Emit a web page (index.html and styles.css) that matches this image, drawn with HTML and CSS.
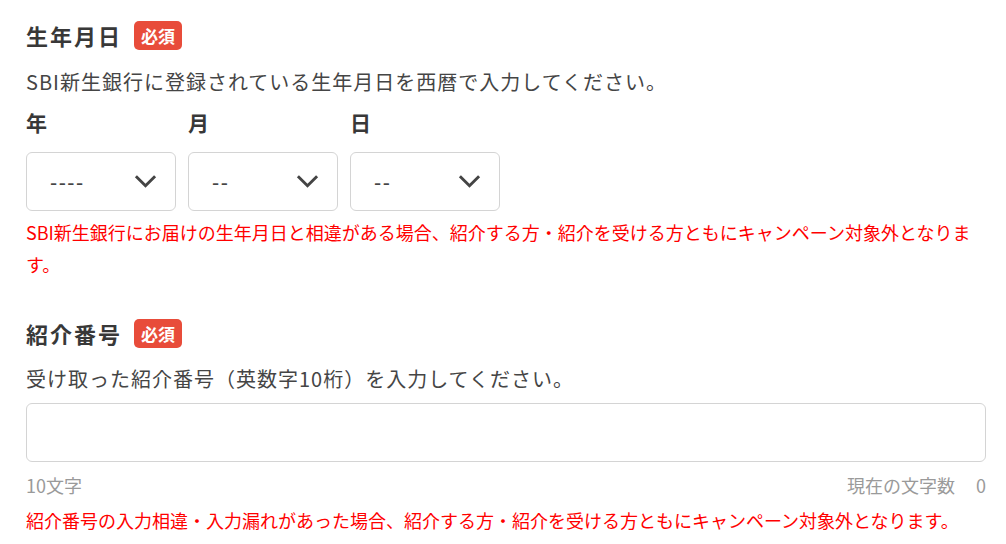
FILE: index.html
```html
<!DOCTYPE html>
<html lang="ja">
<head>
<meta charset="utf-8">
<title>紹介キャンペーン申込</title>
<link rel="stylesheet" href="styles.css">
</head>
<body>
<main class="form">
  <section class="field">
    <div class="field-head">
      <h2 class="field-title">生年月日</h2>
      <span class="badge">必須</span>
    </div>
    <p class="field-desc">SBI新生銀行に登録されている生年月日を西暦で入力してください。</p>
    <div class="date-row">
      <div class="date-col">
        <label class="date-label" for="birth-year">年</label>
        <div class="select-wrap">
          <select class="select" id="birth-year"><option>----</option></select>
          <svg class="chevron" viewBox="0 0 24 14" aria-hidden="true"><path d="M2 2 L12 12 L22 2"/></svg>
        </div>
      </div>
      <div class="date-col">
        <label class="date-label" for="birth-month">月</label>
        <div class="select-wrap">
          <select class="select" id="birth-month"><option>--</option></select>
          <svg class="chevron" viewBox="0 0 24 14" aria-hidden="true"><path d="M2 2 L12 12 L22 2"/></svg>
        </div>
      </div>
      <div class="date-col">
        <label class="date-label" for="birth-day">日</label>
        <div class="select-wrap">
          <select class="select" id="birth-day"><option>--</option></select>
          <svg class="chevron" viewBox="0 0 24 14" aria-hidden="true"><path d="M2 2 L12 12 L22 2"/></svg>
        </div>
      </div>
    </div>
    <p class="field-note">SBI新生銀行にお届けの生年月日と相違がある場合、紹介する方・紹介を受ける方ともにキャンペーン対象外となります。</p>
  </section>

  <section class="field field-next">
    <div class="field-head">
      <h2 class="field-title">紹介番号</h2>
      <span class="badge">必須</span>
    </div>
    <p class="field-desc">受け取った紹介番号（英数字10桁）を入力してください。</p>
    <textarea class="text-input" rows="1" aria-label="紹介番号"></textarea>
    <div class="counter">
      <span>10文字</span>
      <span>現在の文字数<span class="counter-num">0</span></span>
    </div>
    <p class="field-note">紹介番号の入力相違・入力漏れがあった場合、紹介する方・紹介を受ける方ともにキャンペーン対象外となります。</p>
  </section>
</main>
</body>
</html>
```

FILE: styles.css
```css
html, body {
  margin: 0;
  background: #fff;
}

body {
  padding: 20px 20px 0 26px;
  font-family: "Noto Sans CJK JP", "Noto Sans", sans-serif;
  color: #454545;
}

.form {
  display: flex;
  flex-direction: column;
}

.field {
  display: flex;
  flex-direction: column;
}

.field-next {
  margin-top: 38px;
}

.field-head {
  display: flex;
  align-items: center;
  gap: 12px;
  height: 30px;
}

.field-title {
  margin: 0;
  font-size: 22px;
  line-height: 30px;
  font-weight: 700;
  color: #383838;
  letter-spacing: 2px;
}

.badge {
  display: inline-flex;
  align-items: center;
  justify-content: center;
  width: 48px;
  height: 29px;
  border-radius: 5px;
  background: #e84c3a;
  color: #fff;
  font-size: 17px;
  font-weight: 700;
}

.field-desc {
  margin: 16px 0 0;
  font-size: 20px;
  line-height: 32px;
  letter-spacing: 1px;
}

.field-next .field-desc {
  margin-top: 15px;
}

.date-row {
  display: grid;
  grid-template-columns: repeat(3, 150px);
  column-gap: 12px;
  margin-top: 8px;
}

.date-col {
  display: flex;
  flex-direction: column;
}

.date-label {
  font-size: 21px;
  line-height: 32px;
  font-weight: 700;
  color: #383838;
}

.select-wrap {
  position: relative;
  margin-top: 14px;
}

.select {
  appearance: none;
  -webkit-appearance: none;
  display: block;
  width: 100%;
  height: 59px;
  margin: 0;
  padding: 0 0 0 23px;
  border: 1px solid #d4d4d4;
  border-radius: 6px;
  background: #fff;
  font-family: inherit;
  font-size: 20px;
  font-weight: 500;
  color: #454545;
  letter-spacing: 1.5px;
}

.chevron {
  position: absolute;
  right: 19px;
  top: 22px;
  width: 23px;
  height: 14px;
  fill: none;
  stroke: #444;
  stroke-width: 3;
  pointer-events: none;
}

.field-note {
  margin: 5px 0 0;
  font-size: 18px;
  line-height: 32px;
  color: #ff0000;
}

.text-input {
  display: block;
  box-sizing: border-box;
  width: 100%;
  height: 59px;
  margin: 8px 0 0;
  padding: 12px 16px;
  border: 1px solid #d4d4d4;
  border-radius: 6px;
  font-family: inherit;
  font-size: 20px;
  resize: none;
}

.counter {
  display: flex;
  justify-content: space-between;
  margin-top: 9px;
  font-size: 18px;
  line-height: 28px;
  color: #9a9a9a;
}

.counter-num {
  margin-left: 21px;
}
```
